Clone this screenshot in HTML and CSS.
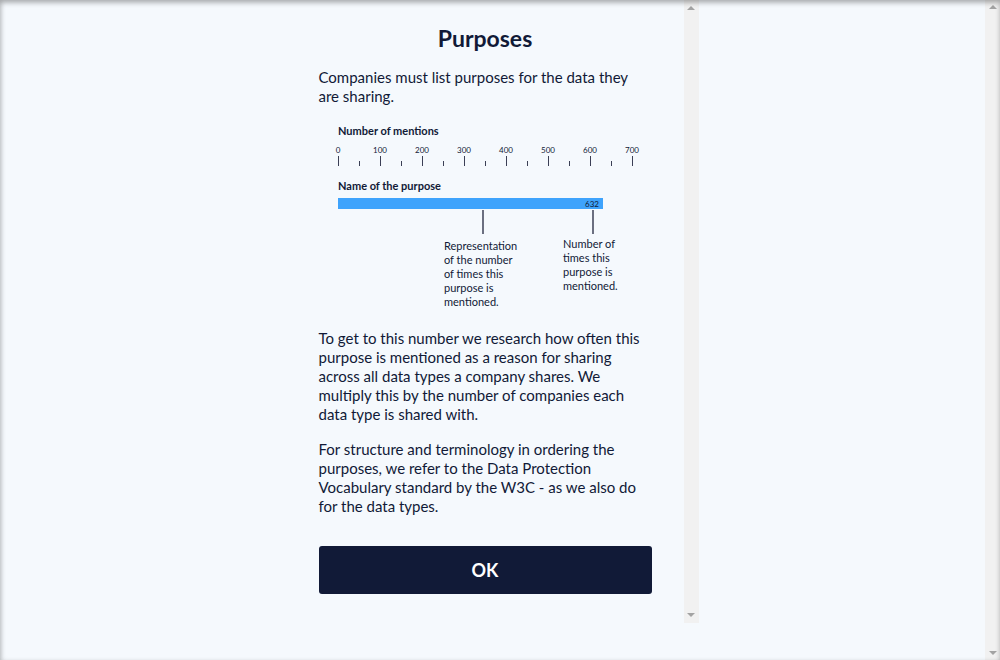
FILE: index.html
```html
<!DOCTYPE html>
<html lang="en">
<head>
<meta charset="utf-8">
<title>Purposes</title>
<link rel="stylesheet" href="styles.css">
</head>
<body>
<div class="frame">
  <main class="stage">
    <div class="panel-wrap">
      <section class="panel">
        <h2 class="title">Purposes</h2>
        <p class="text">Companies must list purposes for the data they are sharing.</p>
        <svg class="chart" width="333" height="196" viewBox="0 0 333 196" aria-label="Chart legend">
          <text class="axis-title" x="19" y="17">Number of mentions</text>
          <g class="tick-labels">
            <text x="19" y="35">0</text>
            <text x="61" y="35">100</text>
            <text x="103" y="35">200</text>
            <text x="145" y="35">300</text>
            <text x="187" y="35">400</text>
            <text x="229" y="35">500</text>
            <text x="271" y="35">600</text>
            <text x="313" y="35">700</text>
          </g>
          <g class="ticks">
            <line x1="19.5" y1="38" x2="19.5" y2="48"/>
            <line x1="40.5" y1="43" x2="40.5" y2="48"/>
            <line x1="61.5" y1="38" x2="61.5" y2="48"/>
            <line x1="82.5" y1="43" x2="82.5" y2="48"/>
            <line x1="103.5" y1="38" x2="103.5" y2="48"/>
            <line x1="124.5" y1="43" x2="124.5" y2="48"/>
            <line x1="145.5" y1="38" x2="145.5" y2="48"/>
            <line x1="166.5" y1="43" x2="166.5" y2="48"/>
            <line x1="187.5" y1="38" x2="187.5" y2="48"/>
            <line x1="208.5" y1="43" x2="208.5" y2="48"/>
            <line x1="229.5" y1="38" x2="229.5" y2="48"/>
            <line x1="250.5" y1="43" x2="250.5" y2="48"/>
            <line x1="271.5" y1="38" x2="271.5" y2="48"/>
            <line x1="292.5" y1="43" x2="292.5" y2="48"/>
            <line x1="313.5" y1="38" x2="313.5" y2="48"/>
          </g>
          <text class="axis-title" x="19" y="72">Name of the purpose</text>
          <rect class="bar" x="19" y="80" width="265" height="11"/>
          <text class="bar-value" x="280" y="89">632</text>
          <line class="pointer" x1="164" y1="92" x2="164" y2="116"/>
          <line class="pointer" x1="274" y1="92" x2="274" y2="116"/>
          <text class="note" x="125" y="132">Representation</text>
          <text class="note" x="125" y="146">of the number</text>
          <text class="note" x="125" y="160">of times this</text>
          <text class="note" x="125" y="174">purpose is</text>
          <text class="note" x="125" y="188">mentioned.</text>
          <text class="note" x="244" y="130">Number of</text>
          <text class="note" x="244" y="144">times this</text>
          <text class="note" x="244" y="158">purpose is</text>
          <text class="note" x="244" y="172">mentioned.</text>
        </svg>
        <p class="text">To get to this number we research how often this purpose is mentioned as a reason for sharing across all data types a company shares. We multiply this by the number of companies each data type is shared with.</p>
        <p class="text text-last">For structure and terminology in ordering the purposes, we refer to the Data Protection Vocabulary standard by the W3C - as we also do for the data types.</p>
        <button class="ok-button" type="button">OK</button>
      </section>
      <div class="scrollbar panel-scrollbar" aria-hidden="true">
        <span class="arrow arrow-up"></span>
        <span class="arrow arrow-down"></span>
      </div>
    </div>
  </main>
  <div class="scrollbar page-scrollbar" aria-hidden="true">
    <span class="arrow arrow-up"></span>
    <span class="arrow arrow-down"></span>
  </div>
</div>
<div class="frame-shadow"></div>
</body>
</html>
```
FILE: styles.css
```css
html, body {
  margin: 0;
  padding: 0;
  height: 100%;
  overflow: hidden;
}

body {
  font-family: Lato, "Noto Sans", sans-serif;
  color: #111a37;
  background: #f5f9fd;
}

.frame {
  height: 100vh;
  display: flex;
  background: #f5f9fd;
}

.stage {
  flex: 1;
  min-width: 0;
}

.panel-wrap {
  width: 412px;
  height: 623px;
  margin: 0 auto;
  display: flex;
}

.panel {
  box-sizing: border-box;
  flex: 1;
  min-width: 0;
  padding: 23px 32px 30px;
  overflow: hidden;
  display: flex;
  flex-direction: column;
}

/* drawn scrollbars */
.scrollbar {
  flex: none;
  width: 15px;
  background: #f1f1f1;
  display: flex;
  flex-direction: column;
  justify-content: space-between;
  align-items: center;
  padding: 6px 0;
  box-sizing: border-box;
}

.page-scrollbar {
  padding: 5px 0 5px;
}

.arrow {
  width: 0;
  height: 0;
  border-left: 4px solid transparent;
  border-right: 4px solid transparent;
}

.arrow-up {
  border-bottom: 4px solid #a3a3a3;
}

.arrow-down {
  border-top: 4px solid #a3a3a3;
}

.title {
  margin: 0 0 15px;
  font-size: 23px;
  line-height: 30px;
  font-weight: 700;
  text-align: center;
  color: #111a37;
}

.text {
  margin: 0;
  font-size: 15px;
  line-height: 19px;
}

.chart {
  display: block;
  margin: 12px 0 15px;
  flex: none;
}

.text-last {
  margin-top: 16px;
}

.axis-title {
  font-family: Lato, "Noto Sans", sans-serif;
  font-size: 11px;
  font-weight: 700;
  fill: #111a37;
}

.tick-labels text {
  font-family: Lato, "Noto Sans", sans-serif;
  font-size: 8px;
  fill: #111a37;
  text-anchor: middle;
}

.ticks line {
  stroke: #3b3f55;
  stroke-width: 1;
}

.bar {
  fill: #3ea3fc;
}

.bar-value {
  font-family: Lato, "Noto Sans", sans-serif;
  font-size: 8px;
  fill: #111a37;
  text-anchor: end;
}

.pointer {
  stroke: #6b6f80;
  stroke-width: 2;
}

.note {
  font-family: Lato, "Noto Sans", sans-serif;
  font-size: 11px;
  fill: #111a37;
}

.ok-button {
  margin-top: 30px;
  height: 48px;
  flex: none;
  border: 0;
  border-radius: 3px;
  background: #111a37;
  color: #ffffff;
  font-family: Lato, "Noto Sans", sans-serif;
  font-size: 18px;
  font-weight: 700;
  cursor: pointer;
}

.frame-shadow {
  position: fixed;
  inset: 0;
  pointer-events: none;
  box-shadow: inset 0 3px 5px rgba(0, 0, 0, 0.28), inset 3px 0 4px rgba(0, 0, 0, 0.07);
}
```
